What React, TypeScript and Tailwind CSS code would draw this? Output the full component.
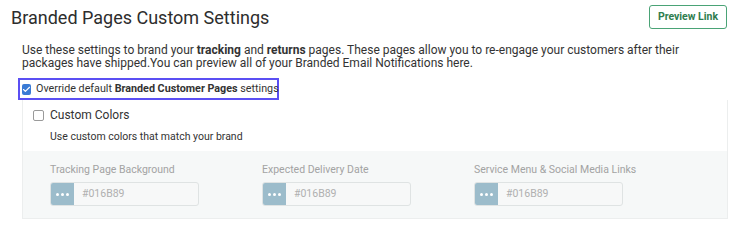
import { Check } from 'lucide-react'

const fields = ['Tracking Page Background', 'Expected Delivery Date', 'Service Menu & Social Media Links']

function ColorInput({ label }: { label: string }) {
    return (
        <div className="w-[212px]">
            <p className="text-[10.5px] leading-[13px] text-[#a3a3a3]">{label}</p>
            <div className="mt-[6px] flex h-[24px] w-[149px] rounded-[3px] border border-[#dfe3e3] bg-[#f7f8f8]">
                <div className="flex w-[23px] items-center justify-center gap-[2px] rounded-l-[2px] bg-[#9cbccb]">
                    <span className="h-[3px] w-[3px] rounded-full bg-white" />
                    <span className="h-[3px] w-[3px] rounded-full bg-white" />
                    <span className="h-[3px] w-[3px] rounded-full bg-white" />
                </div>
                <span className="ml-[8px] self-center text-[10.5px] text-[#b0b0b0]">#016B89</span>
            </div>
        </div>
    )
}

export default function App() {
    return (
        <div className="h-[225px] w-[734px] bg-white font-['Roboto',sans-serif] text-[#333]">
            <div className="flex items-start justify-between pl-[11px] pr-[7px] pt-[5px]">
                <h1 className="pt-[2px] text-[18px] leading-[22px] text-[#2d2d2d]">Branded Pages Custom Settings</h1>
                <button className="h-[24px] w-[78px] rounded-[3px] border border-[#4aa376] text-[10.5px] font-bold text-[#2f7d4f]">
                    Preview Link
                </button>
            </div>

            <p className="ml-[22px] mt-[15px] whitespace-nowrap text-[12px] leading-[13px]">
                Use these settings to brand your <b>tracking</b> and <b>returns</b> pages. These pages allow you to re-engage your customers after their
                <br />
                packages have shipped.You can preview all of your Branded Email Notifications here.
            </p>

            <div className="ml-[18px] mt-[8px] flex h-[22px] w-[261px] items-center border-2 border-[#5b4ff3] pl-[2px]">
                <span className="flex h-[11px] w-[11px] items-center justify-center rounded-[2px] bg-[#3a7bd5]">
                    <Check className="h-[9px] w-[9px] text-white" strokeWidth={3} />
                </span>
                <span className="ml-[5px] whitespace-nowrap text-[10.75px] text-[#333]">
                    Override default <b>Branded Customer Pages</b> settings
                </span>
            </div>

            <div className="ml-[22px] w-[706px] border border-t-0 border-[#eceeee]">
                <div className="pl-[10px] pt-[8px]">
                    <div className="flex items-center">
                        <span className="h-[11px] w-[11px] rounded-[2px] border border-[#9a9a9a] bg-white" />
                        <span className="ml-[6px] text-[12px] leading-[15px] text-[#333]">Custom Colors</span>
                    </div>
                    <p className="ml-[17px] mt-[7px] pb-[8px] text-[10.5px] leading-[13px] text-[#333]">Use custom colors that match your brand</p>
                </div>
                <div className="flex h-[67px] bg-[#f6f8f8] pl-[27px] pt-[12px]">
                    {fields.map((f) => (
                        <ColorInput key={f} label={f} />
                    ))}
                </div>
            </div>
        </div>
    )
}
